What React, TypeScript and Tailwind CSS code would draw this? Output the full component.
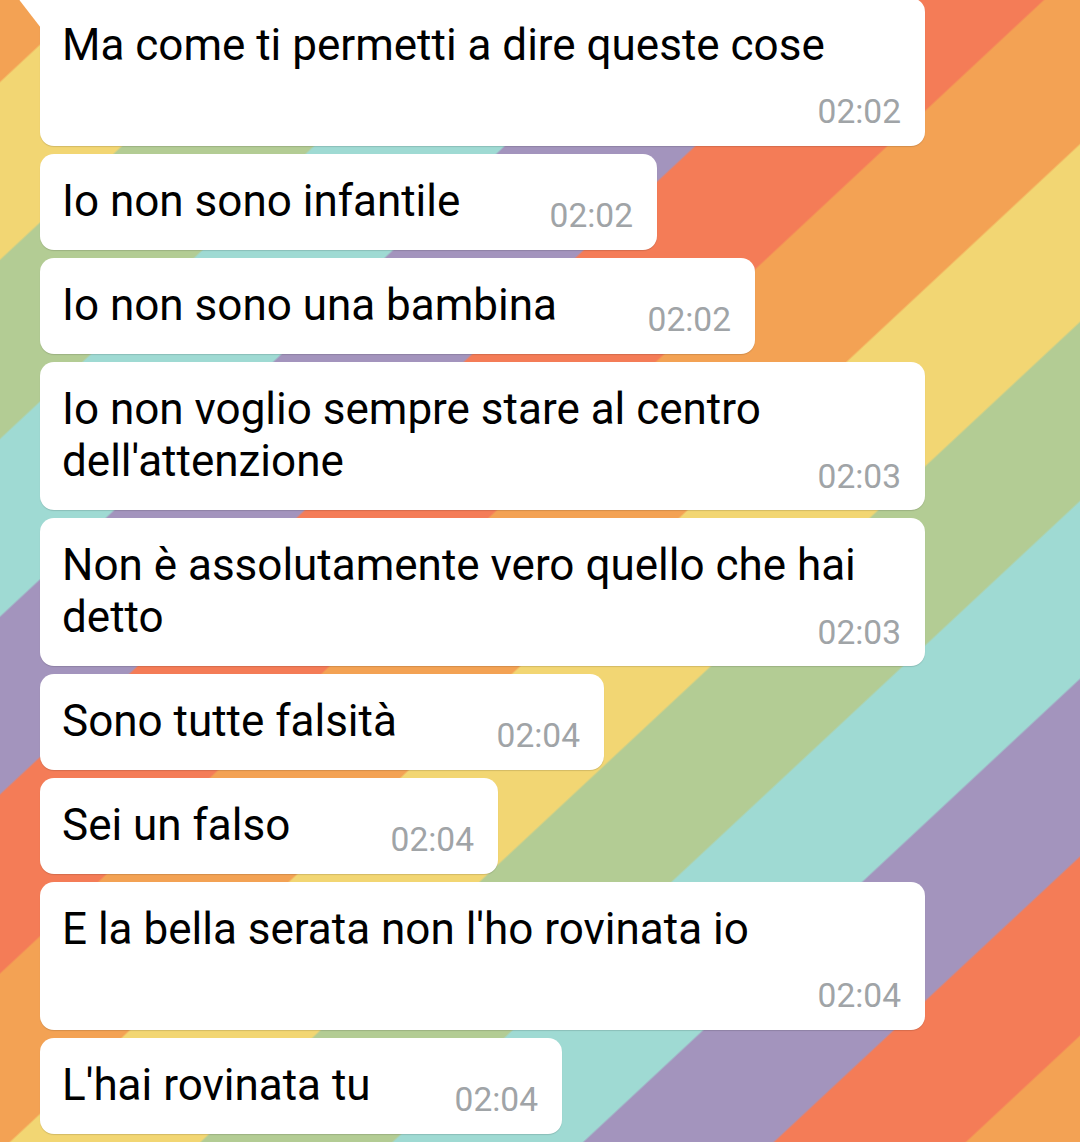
import { FC } from 'react';

type Msg = {
  lines: string[];
  time: string;
  width: string;
  below?: boolean;
  tail?: boolean;
};

const messages: Msg[] = [
  { lines: ['Ma come ti permetti a dire queste cose'], time: '02:02', width: 'w-[885px]', below: true, tail: true },
  { lines: ['Io non sono infantile'], time: '02:02', width: 'w-[617px]' },
  { lines: ['Io non sono una bambina'], time: '02:02', width: 'w-[715px]' },
  { lines: ['Io non voglio sempre stare al centro', "dell'attenzione"], time: '02:03', width: 'w-[885px]' },
  { lines: ['Non è assolutamente vero quello che hai', 'detto'], time: '02:03', width: 'w-[885px]' },
  { lines: ['Sono tutte falsità'], time: '02:04', width: 'w-[564px]' },
  { lines: ['Sei un falso'], time: '02:04', width: 'w-[458px]' },
  { lines: ["E la bella serata non l'ho rovinata io"], time: '02:04', width: 'w-[885px]', below: true },
  { lines: ["L'hai rovinata tu"], time: '02:04', width: 'w-[522px]' },
];

const Time: FC<{ value: string; className?: string }> = ({ value, className = '' }) => (
  <span className={`block text-[33.5px] leading-[36px] text-[#a0a4a7] whitespace-nowrap ${className}`}>{value}</span>
);

const Bubble: FC<{ msg: Msg }> = ({ msg }) => {
  const first = msg.lines.slice(0, -1);
  const last = msg.lines[msg.lines.length - 1];

  return (
    <div
      className={`relative ${msg.width} bg-white pl-[22px] pr-[24px] pt-[21px] shadow-[0_1px_1px_rgba(0,0,0,0.13)] ${
        msg.tail ? 'rounded-tl-none rounded-r-[14px] rounded-bl-[14px]' : 'rounded-[14px]'
      } ${msg.lines.length > 1 ? 'pb-[15px]' : 'pb-[16px]'}`}
    >
      {msg.tail && (
        <svg className="absolute left-[-22px] top-0" width="23" height="30" viewBox="0 0 23 30">
          <path d="M1 0 H23 V30 L2.5 3.5 Q0 0 1 0 Z" fill="#ffffff" />
        </svg>
      )}
      {first.map((line, i) => (
        <span key={i} className="block text-[44px] leading-[52px] text-black">
          {line}
        </span>
      ))}
      {msg.below ? (
        <div className="flex flex-col">
          <span className="text-[44px] leading-[52px] text-black">{last}</span>
          <Time value={msg.time} className="mt-[23px] self-end" />
        </div>
      ) : (
        <div className="flex items-start justify-between">
          <span className="text-[44px] leading-[52px] text-black">{last}</span>
          <Time value={msg.time} className={msg.lines.length > 1 ? 'mt-[24px]' : 'mt-[23px]'} />
        </div>
      )}
    </div>
  );
};

const App: FC = () => {
  return (
    <div className="relative h-[1142px] w-[1080px] overflow-hidden font-['Roboto',sans-serif] bg-[repeating-linear-gradient(137deg,#f3a254_0px,#f3a254_59px,#f2d673_61px,#f2d673_189px,#b3cc94_191px,#b3cc94_320px,#9fdad3_322px,#9fdad3_450px,#a394bd_452px,#a394bd_580px,#f47c57_582px,#f47c57_711px,#f3a254_713px,#f3a254_782px)]">
      <div className="-mt-[2px] flex flex-col gap-[8px] pl-[40px]">
        {messages.map((m, i) => (
          <Bubble key={i} msg={m} />
        ))}
      </div>
    </div>
  );
};

export default App;
